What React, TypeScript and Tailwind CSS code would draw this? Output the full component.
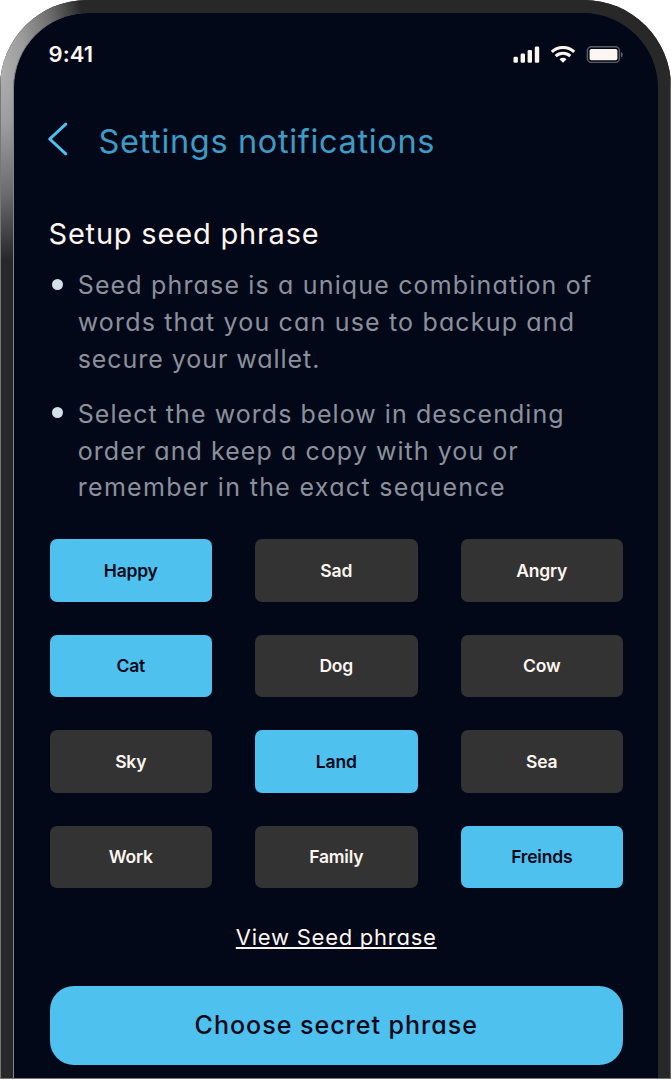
const words = [
  { label: "Happy", selected: true },
  { label: "Sad", selected: false },
  { label: "Angry", selected: false },
  { label: "Cat", selected: true },
  { label: "Dog", selected: false },
  { label: "Cow", selected: false },
  { label: "Sky", selected: false },
  { label: "Land", selected: true },
  { label: "Sea", selected: false },
  { label: "Work", selected: false },
  { label: "Family", selected: false },
  { label: "Freinds", selected: true },
];

function StatusBar() {
  return (
    <div className="mt-[27px] flex h-7 items-center justify-between pl-[34.5px] pr-[35px]">
      <span className="text-[22px] font-semibold leading-7 tracking-[0.1px] text-[#fdf6f0]">9:41</span>
      <svg width="110" height="17" viewBox="0 0 110 17" className="block" fill="#fdf6f0">
        <rect x="0.5" y="10.8" width="4.4" height="6" rx="1.3" />
        <rect x="7.6" y="7.6" width="4.4" height="9.2" rx="1.3" />
        <rect x="14.6" y="4" width="4.4" height="12.8" rx="1.3" />
        <rect x="21.8" y="0.5" width="4.4" height="16.3" rx="1.3" />
        <g fill="none" stroke="#fdf6f0" strokeWidth="3">
          <path d="M38.8 5.9a16.2 16.2 0 0 1 22.4 0" />
          <path d="M42.7 10.2a10.6 10.6 0 0 1 14.6 0" />
        </g>
        <path d="M50 16.8l-3.5-3.6a5 5 0 0 1 7 0z" />
        <rect x="74.4" y="0.8" width="32" height="15.6" rx="4" fill="none" stroke="#fdf6f0" strokeOpacity="0.35" strokeWidth="1.5" />
        <path d="M108 6v5.4a3 3 0 0 0 0-5.4z" fillOpacity="0.4" />
        <rect x="76.6" y="3" width="27.8" height="11.2" rx="1.8" />
      </svg>
    </div>
  );
}

function Bullet({ lines }: { lines: { text: string; spacing: string }[] }) {
  return (
    <li className="flex">
      <span className="ml-[2.5px] mt-[11.5px] h-[11px] w-[11px] shrink-0 rounded-full bg-[#d3dfe9]" />
      <p className="ml-[14.7px] text-[25px] leading-[36.8px] text-[#8b919c] [font-feature-settings:'cv11']">
        {lines.map((line) => (
          <span key={line.text} className={"block whitespace-nowrap " + line.spacing}>
            {line.text}
          </span>
        ))}
      </p>
    </li>
  );
}

export default function App() {
  return (
    <div className="h-[1079px] w-[671px] overflow-hidden bg-white font-['Inter',sans-serif]">
      <div className="flex h-full flex-col rounded-t-[87px] border-b border-[#777777] bg-[#282828] bg-[linear-gradient(90deg,#777777_1px,transparent_1px,transparent_670px,#666666_670px),radial-gradient(ellipse_86px_190px_at_0px_70px,#b0b0b0_0%,#9c9c9c_30%,#6c6c6c_65%,#282828_100%)] pl-[13px] pr-[13px] pt-[13px]">
        <main className="flex flex-1 flex-col rounded-t-[75px] border-l border-[#858585] bg-[#030818]">
          <StatusBar />
          <header className="mt-[53.5px] flex h-10 items-center">
            <svg width="22" height="36" viewBox="0 0 22 36" className="ml-[33px] mt-[-5px] block" fill="none" stroke="#4fc1ee" strokeWidth="3" strokeLinecap="round" strokeLinejoin="round">
              <path d="M18.8 3.2L2.7 18l16.1 14.8" />
            </svg>
            <h1 className="ml-[29.5px] whitespace-nowrap text-[32.5px] leading-10 tracking-[0.66px] text-[#3d9bc5]">Settings notifications</h1>
          </header>
          <section className="mt-[52px] pl-[35.5px] pr-[35px]">
            <h2 className="ml-[-1px] text-[29px] leading-10 tracking-[0.8px] text-[#fdf6f0]">Setup seed phrase</h2>
            <ul className="mt-[13.5px] flex flex-col gap-[18.4px]">
              <Bullet
                lines={[
                  { text: "Seed phrase is a unique combination of", spacing: "tracking-[1.16px]" },
                  { text: "words that you can use to backup and", spacing: "tracking-[1.17px]" },
                  { text: "secure your wallet.", spacing: "tracking-[0.95px]" },
                ]}
              />
              <Bullet
                lines={[
                  { text: "Select the words below in descending", spacing: "tracking-[1.06px]" },
                  { text: "order and keep a copy with you or", spacing: "tracking-[1.06px]" },
                  { text: "remember in the exact sequence", spacing: "tracking-[1.32px]" },
                ]}
              />
            </ul>
            <div className="mt-[33.2px] grid grid-cols-3 gap-x-[43px] gap-y-[33px]">
              {words.map((word) => (
                <button
                  key={word.label}
                  className={
                    "flex h-[62.5px] items-center justify-center rounded-[7px] pt-[1px] text-[17.5px] font-semibold tracking-[-0.2px] " +
                    (word.selected ? "bg-[#4fc1ee] text-[#030818]" : "bg-[#333333] text-[#fdf6f0]")
                  }
                >
                  {word.label}
                </button>
              ))}
            </div>
            <a className="mx-auto mt-[33px] block w-fit whitespace-nowrap text-[22px] leading-8 tracking-[0.75px] text-[#fdf6f0] underline decoration-[1.5px] underline-offset-[2px] [font-feature-settings:'cv11'] [text-decoration-skip-ink:none]">
              View Seed phrase
            </a>
            <button className="mt-[33px] flex h-[78.5px] w-full items-center justify-center rounded-[24px] bg-[#4fc1ee] pt-[1px] text-[25px] font-medium tracking-[1.0px] text-[#030818] [font-feature-settings:'cv11']">
              Choose secret phrase
            </button>
          </section>
        </main>
      </div>
    </div>
  );
}
